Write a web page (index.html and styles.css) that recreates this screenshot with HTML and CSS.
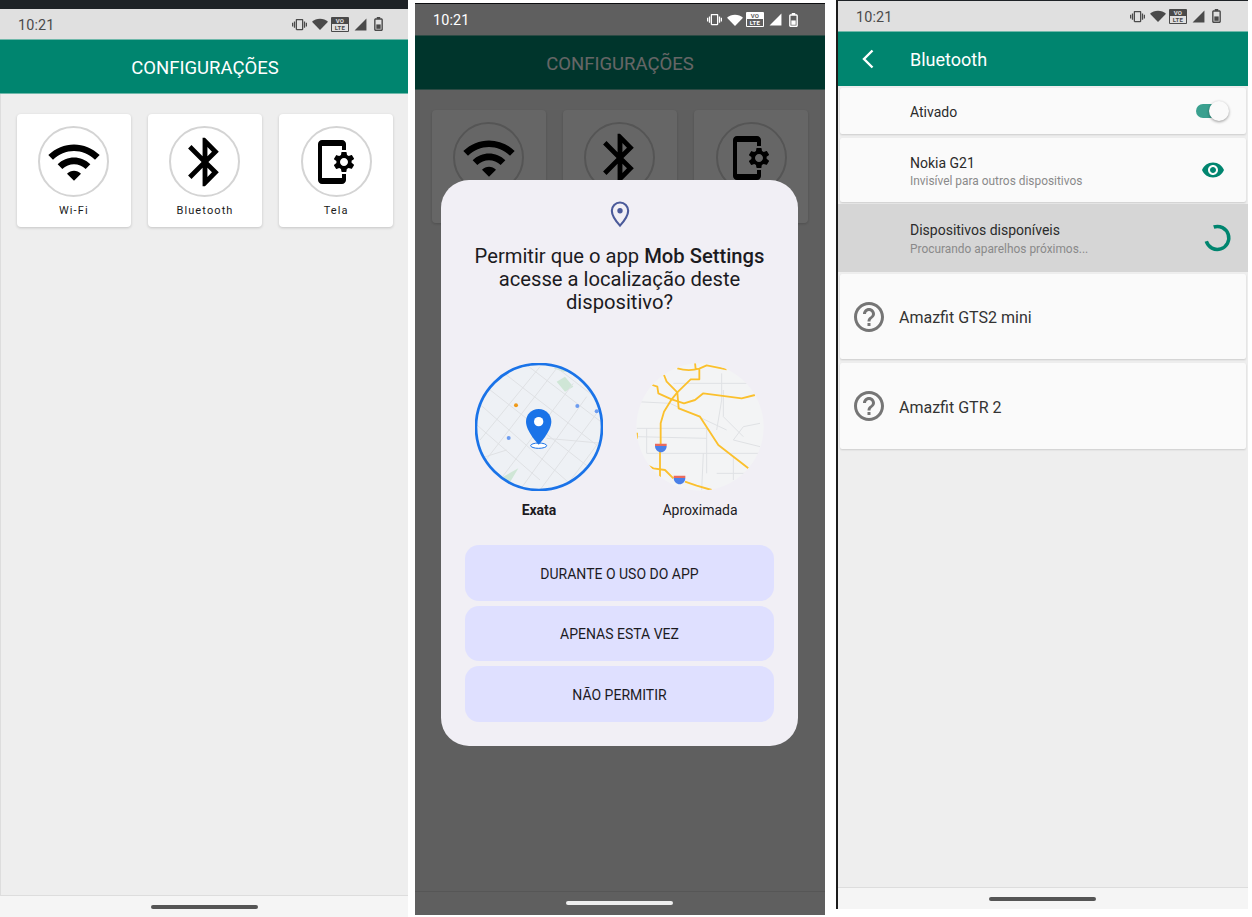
FILE: index.html
```html
<!DOCTYPE html>
<html lang="pt-BR">
<head>
<meta charset="utf-8">
<title>Mob Settings</title>
<link rel="stylesheet" href="styles.css">
</head>
<body>
<svg class="sprite" aria-hidden="true">
  <defs>
    <symbol id="i-vibrate" viewBox="0 0 24 24"><path d="M0 15h2V9H0v6zm3 2h2V7H3v10zm19-8v6h2V9h-2zm-3 8h2V7h-2v10zM16.5 3h-9C6.67 3 6 3.67 6 4.5v15c0 .83.67 1.5 1.5 1.5h9c.83 0 1.5-.67 1.5-1.5v-15c0-.83-.67-1.5-1.5-1.5zM16 19H8V5h8v14z"/></symbol>
    <symbol id="i-swifi" viewBox="0 0 24 24"><path d="M12 4C7.3 4 3.1 5.8 0 8.8L12 21 24 8.8C20.9 5.8 16.7 4 12 4z"/></symbol>
    <symbol id="i-signal" viewBox="0 0 24 24"><path d="M1 23h22V1z"/></symbol>
    <symbol id="i-battery" viewBox="0 0 10 16"><path d="M3 0h4v1.5h1.2C9.2 1.5 10 2.300 10 3.300v10.900c0 1-.8 1.800-1.800 1.800H1.800C.8 16 0 15.200 0 14.200V3.300c0-1 .8-1.800 1.800-1.800H3zM1.800 3.200a.2.2 0 0 0-.2.2v10.800c0 .1.1.2.2.2h6.400c.1 0 .2-.1.2-.2V3.400a.2.2 0 0 0-.2-.2z"/><rect x="2.500" y="8.500" width="5" height="5"/></symbol>
    <symbol id="i-wifi" viewBox="0 0 24 24"><path d="M1 9l2 2c4.970-4.970 13.030-4.970 18 0l2-2C16.930 2.930 7.080 2.930 1 9zm8 8l3 3 3-3c-1.650-1.660-4.340-1.660-6 0zm-4-4l2 2c2.760-2.760 7.240-2.760 10 0l2-2C15.140 9.140 8.870 9.140 5 13z"/></symbol>
    <symbol id="i-bt" viewBox="0 0 24 24"><path d="M17.710 7.710L12 2h-1v7.590L6.410 5 5 6.410 10.590 12 5 17.590 6.410 19 11 14.410V22h1l5.710-5.710-4.300-4.290 4.300-4.290zM13 5.830l1.880 1.880L13 9.590V5.830zm1.880 10.460L13 18.170v-3.760l1.880 1.880z"/></symbol>
    <symbol id="i-setup" viewBox="0 0 24 24"><g transform="matrix(-1 0 0 1 24 0)"><path d="M11.800 12.500v-1l1.100-.8c.1-.1.1-.2.1-.3l-1-1.700c-.1-.1-.2-.2-.3-.1l-1.300.4c-.3-.2-.6-.4-.9-.5l-.2-1.300c0-.1-.1-.2-.3-.2H7c-.1 0-.2.1-.3.2l-.2 1.300c-.3.1-.6.3-.9.5l-1.300-.5c-.1 0-.2 0-.3.1l-1 1.700c-.1.1 0 .2.1.3l1.100.8v1l-1.100.8c-.1.2-.1.3-.1.4l1 1.700c.1.1.2.2.3.1l1.400-.4c.3.2.6.4.9.5l.2 1.300c-.1.1.1.2.2.2h2c.1 0 .2-.1.3-.2l.2-1.300c.3-.1.6-.3.9-.5l1.300.5c.1 0 .2 0 .3-.1l1-1.700c.1-.1 0-.2-.1-.3l-1.100-.9zM8 14c-1.100 0-2-.9-2-2s.9-2 2-2 2 .9 2 2-.9 2-2 2zM19 1H9c-1.100 0-2 .9-2 2v3h2V4h10v16H9v-2H7v3c0 1.100.9 2 2 2h10c1.100 0 2-.9 2-2V3c0-1.100-.9-2-2-2z"/></g></symbol>
    <symbol id="i-help" viewBox="0 0 24 24"><path d="M11 18h2v-2h-2v2zm1-16C6.480 2 2 6.480 2 12s4.480 10 10 10 10-4.480 10-10S17.520 2 12 2zm0 18c-4.410 0-8-3.590-8-8s3.590-8 8-8 8 3.590 8 8-3.590 8-8 8zm0-14c-2.210 0-4 1.790-4 4h2c0-1.100.9-2 2-2s2 .9 2 2c0 2-3 1.750-3 5h2c0-2.250 3-2.500 3-5 0-2.210-1.790-4-4-4z"/></symbol>
    <clipPath id="clip-exact"><circle cx="297" cy="261" r="190"/></clipPath>
    <clipPath id="clip-approx"><circle cx="780" cy="261" r="191"/></clipPath>
  </defs>
</svg>

<main class="desk">

  <section class="phone phone-home">
    <div class="topline topline-tall"></div>
    <div class="status">
      <span class="time">10:21</span>
      <span class="status-icons">
        <svg class="si si-vib"><use href="#i-vibrate"/></svg>
        <svg class="si si-wifi"><use href="#i-swifi"/></svg>
        <span class="volte"><b>VO</b><b>LTE</b></span>
        <svg class="si si-sig"><use href="#i-signal"/></svg>
        <svg class="si si-bat"><use href="#i-battery"/></svg>
      </span>
    </div>
    <header class="appbar appbar-center">CONFIGURAÇÕES</header>
    <div class="content">
      <div class="tiles">
        <div class="tile"><span class="disc"><svg class="tile-icon tile-icon-wifi"><use href="#i-wifi"/></svg></span><span class="tile-label">Wi-Fi</span></div>
        <div class="tile"><span class="disc"><svg class="tile-icon"><use href="#i-bt"/></svg></span><span class="tile-label">Bluetooth</span></div>
        <div class="tile"><span class="disc"><svg class="tile-icon tile-icon-setup"><use href="#i-setup"/></svg></span><span class="tile-label">Tela</span></div>
      </div>
    </div>
    <footer class="navbar"><span class="handle"></span></footer>
  </section>

  <section class="phone phone-dialog">
    <div class="topline"></div>
    <div class="status status-dim">
      <span class="time">10:21</span>
      <span class="status-icons">
        <svg class="si si-vib"><use href="#i-vibrate"/></svg>
        <svg class="si si-wifi"><use href="#i-swifi"/></svg>
        <span class="volte"><b>VO</b><b>LTE</b></span>
        <svg class="si si-sig"><use href="#i-signal"/></svg>
        <svg class="si si-bat"><use href="#i-battery"/></svg>
      </span>
    </div>
    <header class="appbar appbar-center">CONFIGURAÇÕES</header>
    <div class="content">
      <div class="tiles">
        <div class="tile"><span class="disc"><svg class="tile-icon tile-icon-wifi"><use href="#i-wifi"/></svg></span><span class="tile-label">Wi-Fi</span></div>
        <div class="tile"><span class="disc"><svg class="tile-icon"><use href="#i-bt"/></svg></span><span class="tile-label">Bluetooth</span></div>
        <div class="tile"><span class="disc"><svg class="tile-icon tile-icon-setup"><use href="#i-setup"/></svg></span><span class="tile-label">Tela</span></div>
      </div>
    </div>
    <footer class="navbar"><span class="handle"></span></footer>

    <div class="scrim">
      <div class="dialog">
        <svg class="dialog-pin" viewBox="0 0 24 24"><path d="M12 2.200C8.100 2.200 5 5.300 5 9.200c0 5 7 12.800 7 12.800s7-7.800 7-12.800c0-3.900-3.100-7-7-7z"/><circle cx="12" cy="9.200" r="2.300"/></svg>
        <h2 class="dialog-title">Permitir que o app <strong>Mob Settings</strong> acesse a localização deste dispositivo?</h2>
        <div class="maps">
          <figure class="map">
            <svg class="map-art" viewBox="105 69 384 384">
              <g clip-path="url(#clip-exact)">
                <rect x="105" y="69" width="384" height="384" fill="#eef1f5"/>
                <path d="M340 85l30-10 20 20-20 0zM350 125l25-15 25 30-25 15zM190 410l45-25-30 50-25 10z" fill="#cfe6d6"/>
                <g class="street">
                  <path d="M105 180L400 440M125 130L470 400M180 90L489 330M260 75L489 250M340 75L489 190M105 250L300 420"/>
                  <path d="M300 80L120 300M350 85L130 370M400 130L180 420M440 170L240 450M470 220L300 450M489 290L370 450"/>
                  <path d="M320 295L489 310M105 360L200 330"/>
                </g>
                <circle cx="228" cy="196" r="6" fill="#ef9a1a"/>
                <circle cx="412" cy="198" r="6" fill="#6c9cf0"/>
                <circle cx="470" cy="214" r="6" fill="#6c9cf0"/>
                <circle cx="206" cy="294" r="6" fill="#6c9cf0"/>
                <ellipse cx="296" cy="317" rx="24" ry="8" fill="#fff" stroke="#1a73e8" stroke-width="3"/>
                <path d="M296 207c-22 0-38 17-38 38 0 29 38 69 38 69s38-40 38-69c0-21-16-38-38-38z" fill="#1a73e8"/>
                <circle cx="296" cy="245" r="14" fill="#fff"/>
              </g>
              <circle cx="297" cy="261" r="189" fill="none" stroke="#1a73e8" stroke-width="8"/>
            </svg>
            <figcaption class="map-label map-label-strong">Exata</figcaption>
          </figure>
          <figure class="map">
            <svg class="map-art" viewBox="588 69 384 384">
              <g clip-path="url(#clip-approx)">
                <rect x="588" y="69" width="384" height="384" fill="#f3f4f5"/>
                <g class="street">
                  <path d="M590 265H800V400M590 290L800 295M620 265V340H960M845 100V180L830 270M700 130H960M850 150L850 230L910 290M590 185L690 190L860 270M960 250L910 260L880 300L960 320M880 350V420M830 400H960M790 340L785 450"/>
                </g>
                <g class="road">
                  <path d="M712 85Q745 95 778 86L800 76L860 88M765 68L767 88M778 86V118H752L712 157"/>
                  <path d="M672 105L680 125L712 157L716 205L780 230L835 315L925 385"/>
                  <path d="M637 135L652 140L655 160L695 178L732 190L765 180L790 160L905 175L945 165"/>
                  <path d="M712 157L695 178L672 215L662 250V312M660 335V412"/>
                  <path d="M627 378L640 385L675 390L700 415M735 425L770 437L815 450M591 278V296"/>
                </g>
                <path d="M645 318h35c0 11-8 19-17 19s-18-8-18-19zM701 414h35c0 11-8 19-17 19s-18-8-18-19z" fill="#4a80e8"/>
                <path d="M645 311h35v7h-35zM701 407h35v7h-35z" fill="#ea6a5e"/>
              </g>
            </svg>
            <figcaption class="map-label">Aproximada</figcaption>
          </figure>
        </div>
        <div class="actions">
          <button class="action">DURANTE O USO DO APP</button>
          <button class="action">APENAS ESTA VEZ</button>
          <button class="action">NÃO PERMITIR</button>
        </div>
      </div>
    </div>
  </section>

  <section class="phone phone-bt">
    <div class="topline"></div>
    <div class="status">
      <span class="time">10:21</span>
      <span class="status-icons">
        <svg class="si si-vib"><use href="#i-vibrate"/></svg>
        <svg class="si si-wifi"><use href="#i-swifi"/></svg>
        <span class="volte"><b>VO</b><b>LTE</b></span>
        <svg class="si si-sig"><use href="#i-signal"/></svg>
        <svg class="si si-bat"><use href="#i-battery"/></svg>
      </span>
    </div>
    <header class="appbar">
      <svg class="back" viewBox="0 0 14 20"><path d="M11.500 1.500L3 10l8.500 8.500"/></svg>
      <span class="appbar-title">Bluetooth</span>
    </header>
    <div class="content list">
      <div class="row row-toggle">
        <span class="row-title">Ativado</span>
        <span class="switch"><span class="switch-thumb"></span></span>
      </div>
      <div class="row row-info">
        <span class="row-text"><span class="row-title">Nokia G21</span><span class="row-sub">Invisível para outros dispositivos</span></span>
        <svg class="eye" viewBox="0 0 24 24"><path d="M12 4.500C7 4.500 2.730 7.610 1 12c1.730 4.390 6 7.500 11 7.500s9.270-3.110 11-7.500c-1.730-4.390-6-7.500-11-7.500zM12 17c-2.760 0-5-2.240-5-5s2.240-5 5-5 5 2.240 5 5-2.240 5-5 5zm0-8c-1.660 0-3 1.340-3 3s1.340 3 3 3 3-1.340 3-3-1.340-3-3-3z"/></svg>
      </div>
      <div class="row row-section">
        <span class="row-text"><span class="row-title">Dispositivos disponíveis</span><span class="row-sub">Procurando aparelhos próximos...</span></span>
        <svg class="spinner" viewBox="0 0 30 30"><path d="M11.700 4A11.500 11.500 0 1 1 4.300 18.300"/></svg>
      </div>
      <div class="row row-device">
        <svg class="help"><use href="#i-help"/></svg>
        <span class="device-name">Amazfit GTS2 mini</span>
      </div>
      <div class="row row-device row-device-last">
        <svg class="help"><use href="#i-help"/></svg>
        <span class="device-name">Amazfit GTR 2</span>
      </div>
    </div>
    <footer class="navbar"><span class="handle"></span></footer>
  </section>

</main>
</body>
</html>
```

FILE: styles.css
```css
* { box-sizing: border-box; }
html, body { margin: 0; padding: 0; background: #fff; }
body { font-family: Roboto, "Liberation Sans", sans-serif; width: 1252px; height: 917px; overflow: hidden; }
.sprite { position: absolute; width: 0; height: 0; }

.desk { display: flex; align-items: flex-start; }

.phone { position: relative; width: 410px; display: flex; flex-direction: column; background: #eee; overflow: hidden; flex: none; }
.phone-home { height: 917px; clip-path: inset(0 2px 0 0); box-shadow: inset 1px 0 #ddd; }
.phone-dialog { height: 912px; margin-top: 3px; margin-left: 5px; }
.phone-bt { height: 909px; margin-left: 11px; box-sizing: content-box; border-left: 2px solid #1c1c1c; }

.topline { height: 1px; background: #1e2226; flex: none; }
.topline-tall { height: 9px; }

.status { height: 30px; flex: none; display: flex; align-items: center; justify-content: space-between; padding: 0 27px 0 18px; background: #e0e0e0; color: #4a4a4a; }
.status-dim { position: relative; z-index: 3; height: 31px; background: #5f5f5f; color: #fff; }
.time { font-size: 14.400px; letter-spacing: .1px; margin-top: 2px; }
.status-icons { display: flex; align-items: center; }
.si { fill: currentColor; display: block; }
.si-vib { width: 15px; height: 15px; }
.si-wifi { width: 16px; height: 16px; margin-left: 5px; }
.si-sig { width: 13px; height: 13px; margin-left: 5px; }
.si-bat { width: 9px; height: 14px; margin-left: 7px; }
.volte { display: flex; flex-direction: column; width: 18px; height: 15px; margin-left: 3px; background: currentColor; border-radius: 1px; padding: 1px; }
.volte b { font-weight: 700; font-size: 6px; line-height: 6px; height: 6px; text-align: center; color: #e0e0e0; letter-spacing: .3px; }
.volte b:last-child { height: 7px; line-height: 7px; background: #e0e0e0; color: #4a4a4a; }
.status-dim .volte b { color: #5f5f5f; }
.status-dim .volte b:last-child { background: #5f5f5f; color: #fff; }

.appbar { height: 55px; flex: none; background: #00856f; color: #fff; font-size: 18px; display: flex; align-items: center; border-top: 1px solid #6fb8aa; }
.appbar-center { justify-content: center; padding-top: 2px; font-size: 18.500px; border-bottom: 1px solid #6fb8aa; }
.back { width: 14px; height: 20px; margin-left: 23px; fill: none; stroke: #fff; stroke-width: 2.400; }
.appbar-title { margin-left: 35px; }

.content { flex: 1; min-height: 0; }
.tiles { display: grid; grid-template-columns: repeat(3, 1fr); gap: 17px; padding: 20px 16.700px 0; }
.tile { height: 113px; background: #fff; border-radius: 4px; box-shadow: 0 1px 3px rgba(0,0,0,.18); display: flex; flex-direction: column; align-items: center; padding-top: 12px; }
.disc { width: 71px; height: 71px; border: 2px solid #d4d4d4; border-radius: 50%; display: flex; align-items: center; justify-content: center; }
.tile-icon { width: 58px; height: 58px; fill: #000; flex: none; }
.tile-icon-wifi { width: 56px; height: 56px; }
.tile-icon-setup { width: 48px; height: 48px; }
.tile-label { margin-top: 7px; font-size: 11px; line-height: 14px; letter-spacing: 1.100px; color: #1a1a1a; }

.navbar { height: 22px; flex: none; background: #f5f5f5; border-top: 1px solid #ddd; display: flex; justify-content: center; padding: 9px 2px 0 0; }
.handle { width: 107px; height: 4px; border-radius: 2px; background: #555; }
.phone-dialog .navbar { position: relative; z-index: 3; height: 24px; background: #5f5f5f; border-top-color: #565656; }
.phone-dialog .handle { background: #eee; }

.scrim { position: absolute; inset: 0; z-index: 2; background: rgba(0,0,0,.6); display: flex; justify-content: center; align-items: flex-start; padding: 177px 1px 0 0; }
.dialog { width: 357px; height: 566px; background: #f1eff5; border-radius: 28px; padding: 20px 24px 25px; display: flex; flex-direction: column; align-items: center; }
.dialog-pin { width: 28px; height: 28px; flex: none; fill: none; stroke: #4b5a9a; stroke-width: 1.800; }
.dialog-pin circle { fill: #4b5a9a; stroke: none; }
.dialog-title { margin: 17px 0 0; font-size: 20.200px; line-height: 23px; font-weight: 400; text-align: center; color: #1c1b1f; width: 304px; }
.dialog-title strong { font-weight: 500; }
.maps { display: flex; gap: 33px; margin-top: 49px; }
.map { margin: 0; width: 128px; display: flex; flex-direction: column; align-items: center; }
.map-art { width: 128px; height: 128px; display: block; }
.map-label { margin-top: 9px; font-size: 14px; line-height: 20px; color: #1c1b1f; }
.map-label-strong { font-weight: 700; }
.street { fill: none; stroke: #dfe1e4; stroke-width: 3; }
.road { fill: none; stroke: #fbc02d; stroke-width: 5.500; stroke-linejoin: round; }
.actions { width: 100%; margin-top: 25px; display: flex; flex-direction: column; gap: 5px; }
.action { height: 55.500px; padding: 2px 0 0; border: 0; border-radius: 14px; background: #dfe0ff; color: #1c1b1f; font: 400 14px Roboto, sans-serif; }

.list { padding-top: 2px; }
.row { display: flex; align-items: center; margin: 0 2px; background: #fafafa; border-radius: 2px; box-shadow: 0 1px 2px rgba(0,0,0,.14); }
.row-toggle { height: 46px; padding: 0 18px 0 70px; justify-content: space-between; }
.row-toggle .row-title { margin-top: 2px; }
.row-info { height: 64px; margin-top: 4px; padding: 0 21px 0 70px; justify-content: space-between; }
.row-info .row-text { margin-top: 3px; gap: 1px; }
.row-section { height: 68px; margin: 2px 0 0; padding: 0 16px 0 72px; justify-content: space-between; background: #d6d6d6; border-radius: 0; box-shadow: none; }
.row-section .row-text { margin-top: 2px; }
.row-device { height: 85px; margin-top: 2px; padding-left: 11px; gap: 12px; }
.row-device-last { height: 86px; margin-top: 4px; }
.row-text { display: flex; flex-direction: column; gap: 2px; }
.row-title { font-size: 14px; line-height: 18px; color: #2b2b2b; }
.row-sub { font-size: 11.900px; line-height: 16px; color: #8a8a8a; }
.switch { position: relative; width: 32px; height: 14px; border-radius: 7px; background: #3aa08f; }
.switch-thumb { position: absolute; right: -1px; top: -3px; width: 20px; height: 20px; border-radius: 50%; background: #fafafa; box-shadow: 0 1px 3px rgba(0,0,0,.4); }
.eye { width: 24px; height: 24px; fill: #00856f; flex: none; }
.spinner { width: 30px; height: 30px; fill: none; stroke: #00856f; stroke-width: 3.500; flex: none; }
.help { width: 36px; height: 36px; fill: #757575; flex: none; }
.device-name { font-size: 16px; color: #333; margin-top: 2px; }
```
